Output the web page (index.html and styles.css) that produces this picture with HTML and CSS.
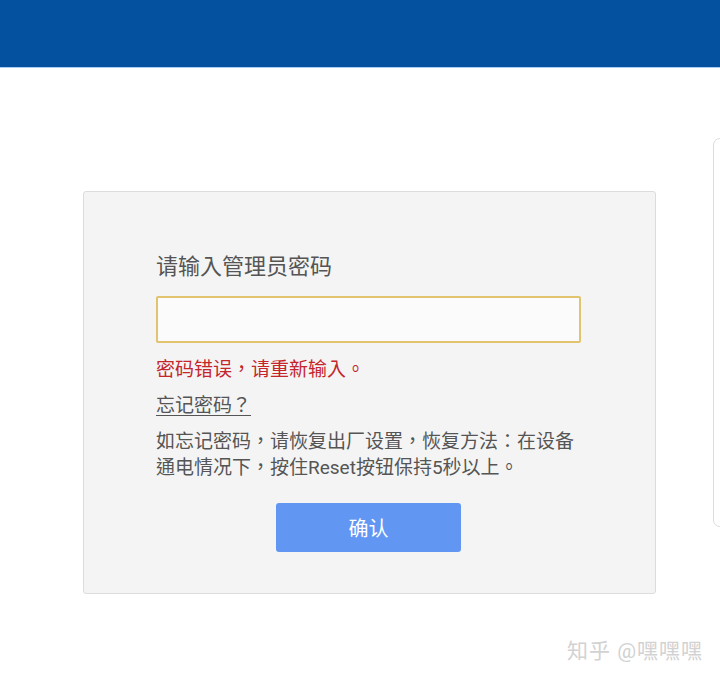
FILE: index.html
```html
<!DOCTYPE html>
<html lang="zh-CN">

<head>
	<meta charset="UTF-8">
	<meta name="viewport" content="width=device-width, initial-scale=1.0">
	<title>管理员登录</title>
	<link rel="stylesheet" href="styles.css">
</head>

<body>
	<header class="topbar"></header>

	<div class="page">
		<div class="login-card">
			<h2 class="login-title">请输入管理员密码</h2>
			<input class="pwd-input" type="password">
			<p class="error">密码错误，请重新输入。</p>
			<a class="forgot" href="#">忘记密码？</a>
			<p class="tip">如忘记密码，请恢复出厂设置，恢复方法：在设备通电情况下，按住Reset按钮保持5秒以上。</p>
			<div class="actions">
				<button class="btn-ok" type="button">确认</button>
			</div>
		</div>

		<!-- side panel, mostly off screen -->
		<div class="side-panel"></div>
	</div>

	<div class="watermark">知乎 @嘿嘿嘿</div>
</body>

</html>
```

FILE: styles.css
```css
html,
body {
	margin: 0;
	padding: 0;
	height: 100%;
	overflow: hidden;
	background: #fff;
	font-family: Roboto, "Noto Sans CJK TC", sans-serif;
	font-feature-settings: "locl" 0;
	text-spacing-trim: space-all;
}

.topbar {
	height: 67px;
	background-color: #03519f;
	border-bottom: 1px solid #a9cdf0;
}

.page {
	display: flex;
	align-items: flex-start;
	gap: 57px;
	padding-left: 83px;
}

.login-card {
	flex-shrink: 0;
	box-sizing: border-box;
	width: 573px;
	height: 403px;
	margin-top: 123px;
	padding: 60px 74px 0 72px;
	background-color: #f4f4f4;
	border: 1px solid #dcdcdc;
	border-radius: 3px;
}

.login-title {
	margin: 0 0 14px;
	font-size: 22px;
	font-weight: normal;
	line-height: 30px;
	color: #555;
}

.pwd-input {
	display: block;
	box-sizing: border-box;
	width: 425px;
	height: 47px;
	margin: 0;
	background-color: #fbfbfb;
	border: 2px solid #e2c46e;
	border-radius: 2px;
	outline: none;
}

.error {
	margin: 14px 0 0;
	font-size: 19px;
	line-height: 26px;
	color: #c4262b;
}

.forgot {
	display: inline-block;
	margin-top: 10px;
	font-size: 19px;
	line-height: 26px;
	color: #555;
	text-decoration: underline;
	text-underline-offset: 3px;
}

.tip {
	margin: 10px 0 0;
	font-size: 19px;
	line-height: 26px;
	color: #555;
}

.actions {
	display: flex;
	justify-content: center;
	margin-top: 22px;
}

.btn-ok {
	width: 185px;
	height: 49px;
	border: none;
	border-radius: 3px;
	background-color: #6197f3;
	color: #fff;
	font-family: inherit;
	font-size: 20px;
	cursor: pointer;
}

.side-panel {
	flex-shrink: 0;
	width: 300px;
	height: 387px;
	margin-top: 70px;
	border: 1px solid #dcdcdc;
	border-radius: 7px;
}

.watermark {
	position: absolute;
	left: 567px;
	top: 634px;
	font-size: 21px;
	color: #d2d2d2;
	letter-spacing: 1px;
}
```
